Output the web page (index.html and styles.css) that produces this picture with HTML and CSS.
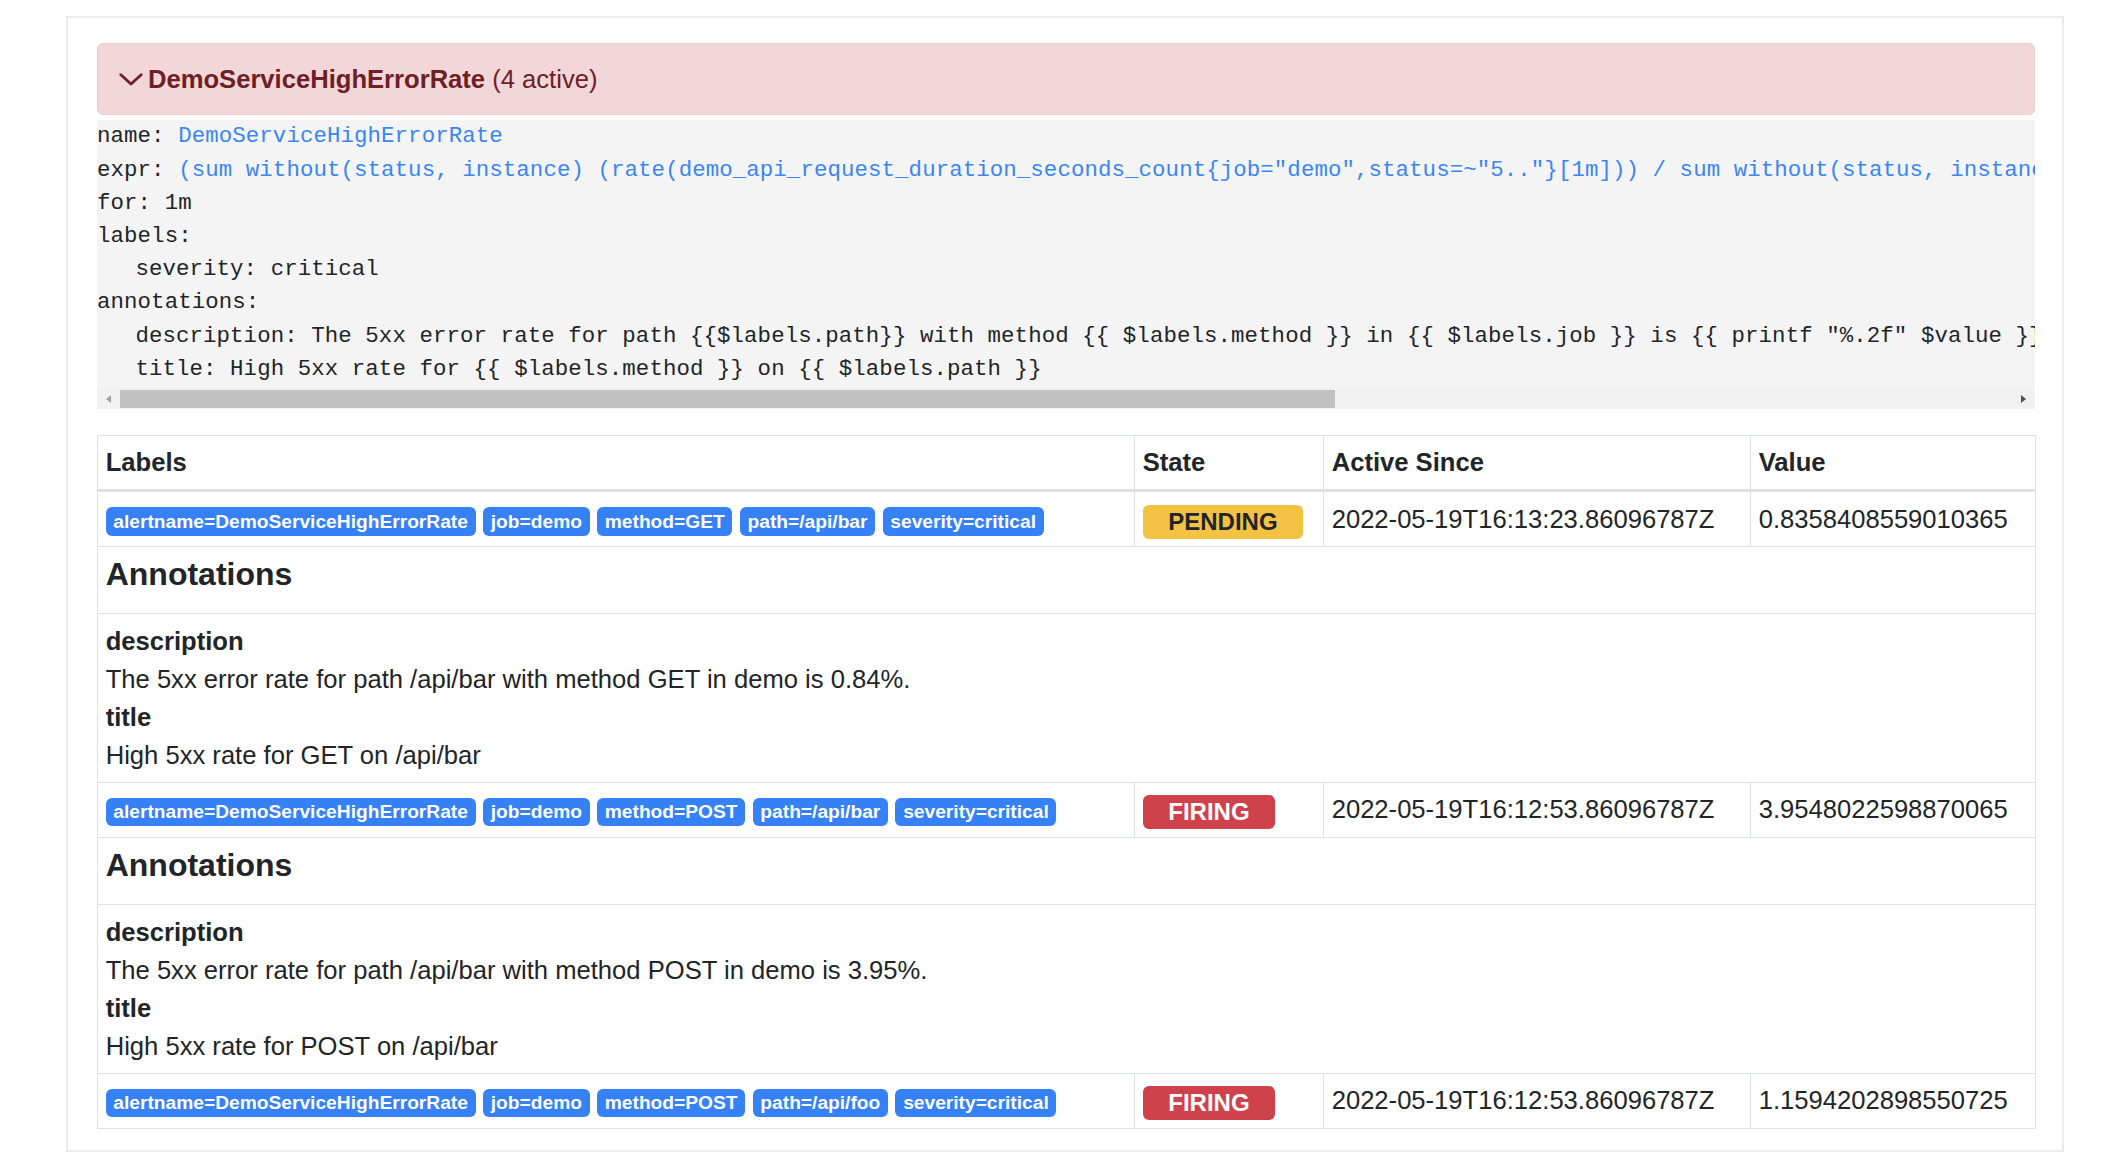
FILE: index.html
```html
<!DOCTYPE html>
<html>
<head>
<meta charset="utf-8">
<title>Alerts</title>
<link rel="stylesheet" href="styles.css">
</head>
<body>
<div class="card">
  <div class="alert-head">
    <svg class="chev" width="24" height="13" viewBox="0 0 24 13"><polyline points="1.8,1.8 12,11 22.2,1.8" fill="none" stroke="#6e2025" stroke-width="2.8" stroke-linecap="round" stroke-linejoin="round"/></svg>
    <span><strong>DemoServiceHighErrorRate</strong> (4 active)</span>
  </div>
  <div class="code-box">
    <pre class="code">name: <span class="lnk">DemoServiceHighErrorRate</span>
expr: <span class="lnk">(sum without(status, instance) (rate(demo_api_request_duration_seconds_count{job="demo",status=~"5.."}[1m])) / sum without(status, instance) (rate(demo_api_request_duration_seconds_count{job="demo"}[1m]))) * 100 &gt; 0.5</span>
for: 1m
labels:
<span class="ind"></span>severity: critical
annotations:
<span class="ind"></span>description: The 5xx error rate for path {{$labels.path}} with method {{ $labels.method }} in {{ $labels.job }} is {{ printf "%.2f" $value }}%.
<span class="ind"></span>title: High 5xx rate for {{ $labels.method }} on {{ $labels.path }}</pre>
    <div class="hscroll">
      <span class="arr-box"><span class="arr arr-l"></span></span>
      <span class="thumb"></span>
      <span class="spacer"></span>
      <span class="arr-box"><span class="arr arr-r"></span></span>
    </div>
  </div>
  <table class="alerts">
    <colgroup>
      <col class="c-labels"><col class="c-state"><col class="c-since"><col class="c-value">
    </colgroup>
    <thead>
      <tr><th>Labels</th><th>State</th><th>Active Since</th><th>Value</th></tr>
    </thead>
    <tbody>
      <tr>
        <td><span class="badge">alertname=DemoServiceHighErrorRate</span><span class="badge">job=demo</span><span class="badge">method=GET</span><span class="badge">path=/api/bar</span><span class="badge">severity=critical</span></td>
        <td><h5 class="state"><span class="sbadge pending">PENDING</span></h5></td>
        <td>2022-05-19T16:13:23.86096787Z</td>
        <td>0.8358408559010365</td>
      </tr>
      <tr><td colspan="4"><h5 class="ann-title">Annotations</h5></td></tr>
      <tr>
        <td colspan="4">
          <div><strong>description</strong><div>The 5xx error rate for path /api/bar with method GET in demo is 0.84%.</div></div>
          <div><strong>title</strong><div>High 5xx rate for GET on /api/bar</div></div>
        </td>
      </tr>
      <tr>
        <td><span class="badge">alertname=DemoServiceHighErrorRate</span><span class="badge">job=demo</span><span class="badge">method=POST</span><span class="badge">path=/api/bar</span><span class="badge">severity=critical</span></td>
        <td><h5 class="state"><span class="sbadge firing">FIRING</span></h5></td>
        <td>2022-05-19T16:12:53.86096787Z</td>
        <td>3.9548022598870065</td>
      </tr>
      <tr><td colspan="4"><h5 class="ann-title">Annotations</h5></td></tr>
      <tr>
        <td colspan="4">
          <div><strong>description</strong><div>The 5xx error rate for path /api/bar with method POST in demo is 3.95%.</div></div>
          <div><strong>title</strong><div>High 5xx rate for POST on /api/bar</div></div>
        </td>
      </tr>
      <tr>
        <td><span class="badge">alertname=DemoServiceHighErrorRate</span><span class="badge">job=demo</span><span class="badge">method=POST</span><span class="badge">path=/api/foo</span><span class="badge">severity=critical</span></td>
        <td><h5 class="state"><span class="sbadge firing">FIRING</span></h5></td>
        <td>2022-05-19T16:12:53.86096787Z</td>
        <td>1.1594202898550725</td>
      </tr>
    </tbody>
  </table>
</div>
</body>
</html>
```
FILE: styles.css
```css
html, body {
  background: #ffffff;
}
body {
  margin: 0;
  font-family: "Liberation Sans", Arial, sans-serif;
  font-size: 25.6px;
  line-height: 38px;
  color: #212529;
}
.card {
  box-sizing: border-box;
  width: 1998px;
  margin: 16px 0 0 66px;
  border: 2px solid #ececec;
  padding: 25px 27px 21px 29px;
}
.alert-head {
  display: flex;
  align-items: center;
  gap: 5px;
  padding: 16px 21px;
  border: 1px solid #eecdd0;
  border-radius: 6px;
  background: #f2d6d8;
  color: #6e2025;
  line-height: 38.4px;
  margin-bottom: 5px;
}
.alert-head strong {
  font-weight: 700;
}
.chev {
  display: block;
  flex: none;
}
.code-box {
  background: #f4f4f4;
  margin-bottom: 25.6px;
}
.code {
  margin: 0;
  padding: 0 0 2px 0;
  font-family: "Liberation Mono", "Courier New", monospace;
  font-size: 22.4px;
  letter-spacing: 0.09px;
  line-height: 33.2px;
  color: #212529;
  white-space: pre;
  overflow: hidden;
}
.lnk {
  color: #3b86f2;
}
.ind {
  display: inline-block;
  width: 38.4px;
}
.hscroll {
  display: flex;
  align-items: center;
  height: 21px;
  background: #f1f1f1;
}
.arr-box {
  flex: none;
  width: 23px;
  height: 21px;
  display: flex;
  align-items: center;
  padding-left: 9px;
  box-sizing: border-box;
}
.arr {
  width: 0;
  height: 0;
  border-top: 4.5px solid transparent;
  border-bottom: 4.5px solid transparent;
}
.arr-l {
  border-right: 5px solid #a3a3a3;
}
.arr-r {
  border-left: 5px solid #505050;
}
.thumb {
  flex: none;
  width: 1215px;
  height: 18px;
  background: #c1c1c1;
}
.spacer {
  flex: 1;
}
.alerts {
  width: 100%;
  border-collapse: collapse;
  table-layout: fixed;
}
.c-labels { width: 1037px; }
.c-state { width: 189px; }
.c-since { width: 427px; }
.c-value { width: 285px; }
.alerts th,
.alerts td {
  border: 1.6px solid #dee2e6;
  padding: 7.68px;
  text-align: left;
  vertical-align: top;
}
.alerts thead th {
  border-bottom-width: 3.2px;
  font-weight: 700;
}
.badge {
  display: inline-block;
  padding: 4.8px 7.68px;
  margin-right: 7.5px;
  font-size: 19.2px;
  font-weight: 700;
  line-height: 1;
  color: #ffffff;
  background: #3581f5;
  border-radius: 6px;
  white-space: nowrap;
}
.state {
  margin: 0;
  font-size: 32px;
  line-height: 38px;
  font-weight: 700;
}
.sbadge {
  display: inline-block;
  padding: 5px 25.6px;
  font-size: 24px;
  font-weight: 700;
  line-height: 1;
  border-radius: 6px;
  white-space: nowrap;
}
.pending {
  background: #f4c242;
  color: #212529;
}
.firing {
  background: #cf424b;
  color: #ffffff;
}
.ann-title {
  margin: 0 0 12.8px 0;
  font-size: 32px;
  line-height: 38px;
  font-weight: 700;
}
.alerts strong {
  font-weight: 700;
}
```
